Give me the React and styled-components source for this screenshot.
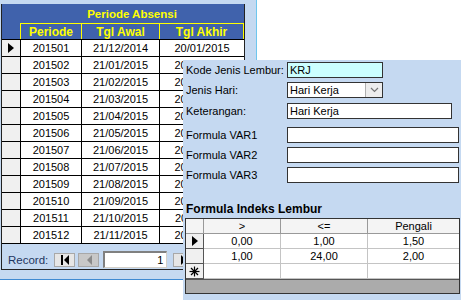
import React from 'react';
import styled, { createGlobalStyle } from 'styled-components';

const Global = createGlobalStyle`
  html, body { margin: 0; padding: 0; background: #fff; }
  body { font-family: "Liberation Sans", Arial, sans-serif; font-size: 11px; color: #000; }
  * { box-sizing: border-box; }
`;

const Desktop = styled.div`
  position: relative;
  width: 461px;
  height: 300px;
  overflow: hidden;
  background: #fff;
`;

const BackWindow = styled.div`
  position: absolute;
  left: 0;
  top: 0;
  width: 257px;
  height: 280px;
  background: #c5d9f1;
  border-right: 1px solid #6ec6ee;
  border-bottom: 1px solid #3f8ad2;
  padding: 4px 0 0 1px;
`;

const Form = styled.div`
  width: 244px;
  height: 266px;
  border: 1px solid #222;
  border-top: none;
  display: flex;
  flex-direction: column;
`;

const TitleBar = styled.div`
  height: 19px;
  background: #4062ac;
  color: #ffff00;
  font-weight: bold;
  font-size: 11.5px;
  display: flex;
  align-items: center;
  justify-content: center;
  padding-left: 18px;
`;

const GridRow = styled.div`
  display: grid;
  grid-template-columns: 19px 61px 78px 84px;
  height: ${p => p.$h}px;
`;

const HeadCell = styled.div`
  background: #4062ac;
  color: #ffff00;
  font-weight: bold;
  font-size: 12px;
  display: flex;
  align-items: center;
  justify-content: center;
  border-top: ${p => (p.$blank ? 'none' : '1px solid #ffff00')};
  border-right: 1px solid #ffff00;
`;

const SelCell = styled.div`
  background: #f0f0f0;
  border-top: 1px solid #000;
  border-right: 1px solid #000;
  display: flex;
  align-items: center;
  justify-content: center;
`;

const DataCell = styled.div`
  background: #fff;
  border-top: 1px solid #000;
  border-right: ${p => (p.$last ? 'none' : '1px solid #000')};
  display: flex;
  align-items: center;
  justify-content: center;
  line-height: 16px;
`;

const TableBody = styled.div`
  border-bottom: 1px solid #000;
`;

const RecordBar = styled.div`
  flex: 1;
  display: flex;
  align-items: center;
  padding: 6px 0 0 6px;
`;

const RecordLabel = styled.span`
  color: #1e3560;
  font-size: 11.5px;
  margin-right: 6px;
`;

const NavBtn = styled.div`
  width: 21px;
  height: 14px;
  margin-right: ${p => p.$mr || 0}px;
  background: ${p => (p.$disabled ? '#c8c8c8' : '#e6e6e6')};
  border: 1px solid #a8a8a8;
  display: flex;
  align-items: center;
  justify-content: center;
`;

const RecordBox = styled.div`
  width: 64px;
  height: 17px;
  margin-right: 6px;
  background: #fff;
  border-top: 2px solid #808080;
  border-left: 2px solid #808080;
  border-right: 1px solid #d4d0c8;
  border-bottom: 1px solid #d4d0c8;
  display: flex;
  align-items: center;
  justify-content: flex-end;
  padding-right: 3px;
`;

const Overlay = styled.div`
  position: absolute;
  left: 183px;
  top: 60px;
  width: 278px;
  height: 240px;
  background: #c5d9f1;
  padding: 2px 0 0 2px;
  display: flex;
  flex-direction: column;
`;

const FieldRow = styled.div`
  display: grid;
  grid-template-columns: 102px auto;
  align-items: center;
  height: 16px;
  margin-top: ${p => p.$mt}px;
`;

const Label = styled.span`
  padding-left: 1px;
  white-space: nowrap;
`;

const Input = styled.div`
  width: ${p => p.$w}px;
  height: 16px;
  background: ${p => p.$bg || '#fff'};
  border: 1px solid #333;
  padding-left: 2px;
  line-height: 14px;
  display: flex;
  align-items: center;
  justify-content: space-between;
`;

const DropBtn = styled.div`
  width: 17px;
  height: 14px;
  background: #ededed;
  border-left: 1px solid #b0b0b0;
  display: flex;
  align-items: center;
  justify-content: center;
`;

const SectionTitle = styled.div`
  margin-top: 19px;
  font-weight: bold;
  font-size: 12px;
  height: 14px;
  line-height: 14px;
  padding-left: 1px;
`;

const SubGrid = styled.div`
  margin-top: 2px;
  width: 275px;
  border: 1px solid #333;
  display: flex;
  flex-direction: column;
`;

const SubRow = styled.div`
  display: grid;
  grid-template-columns: 18px 77px 87px 91px;
  height: 15px;
`;

const SubHead = styled.div`
  background: #f4f4f4;
  border-right: ${p => (p.$last ? 'none' : '1px solid #999')};
  border-bottom: 1px solid #999;
  display: flex;
  align-items: center;
  justify-content: center;
  line-height: 14px;
`;

const SubSel = styled.div`
  background: #f0f0f0;
  border-right: 1px solid #555;
  border-bottom: 1px solid #555;
  display: flex;
  align-items: center;
  justify-content: center;
`;

const SubCell = styled.div`
  background: #fff;
  border-right: ${p => (p.$last ? 'none' : '1px solid #c4c4c4')};
  border-bottom: 1px solid #c4c4c4;
  display: flex;
  align-items: center;
  justify-content: center;
  line-height: 14px;
`;

const GreyArea = styled.div`
  height: 14px;
  background: #ababab;
  border-top: 1px solid #555;
`;

const Pointer = () => (
  <svg width="6" height="10" viewBox="0 0 6 10">
    <polygon points="0,0 6,5 0,10" fill="#000" />
  </svg>
);

const Star = () => (
  <svg width="11" height="11" viewBox="0 0 11 11">
    <g stroke="#000" strokeWidth="1.2">
      <line x1="5.5" y1="0.5" x2="5.5" y2="10.5" />
      <line x1="0.5" y1="5.5" x2="10.5" y2="5.5" />
      <line x1="2" y1="2" x2="9" y2="9" />
      <line x1="9" y1="2" x2="2" y2="9" />
    </g>
  </svg>
);

const FirstIcon = () => (
  <svg width="10" height="10" viewBox="0 0 10 10">
    <rect x="1" y="0" width="2" height="10" fill="#000" />
    <polygon points="9,0 4,5 9,10" fill="#000" />
  </svg>
);

const PrevIcon = () => (
  <svg width="6" height="10" viewBox="0 0 6 10">
    <polygon points="6,0 1,5 6,10" fill="#8a8a8a" />
  </svg>
);

const NextIcon = () => (
  <svg width="6" height="10" viewBox="0 0 6 10">
    <polygon points="0,0 5,5 0,10" fill="#000" />
  </svg>
);

const Chevron = () => (
  <svg width="9" height="6" viewBox="0 0 9 6">
    <polyline points="1,1 4.5,4.5 8,1" fill="none" stroke="#777" strokeWidth="1.2" />
  </svg>
);

const periods = [
  ['201501', '21/12/2014', '20/01/2015'],
  ['201502', '21/01/2015', '20/02/2015'],
  ['201503', '21/02/2015', '20/03/2015'],
  ['201504', '21/03/2015', '20/04/2015'],
  ['201505', '21/04/2015', '20/05/2015'],
  ['201506', '21/05/2015', '20/06/2015'],
  ['201507', '21/06/2015', '20/07/2015'],
  ['201508', '21/07/2015', '20/08/2015'],
  ['201509', '21/08/2015', '20/09/2015'],
  ['201510', '21/09/2015', '20/10/2015'],
  ['201511', '21/10/2015', '20/11/2015'],
  ['201512', '21/11/2015', '20/12/2015'],
];

const indeks = [
  ['0,00', '1,00', '1,50'],
  ['1,00', '24,00', '2,00'],
];

export default function App() {
  return (
    <>
      <Global />
      <Desktop>
        <BackWindow>
          <Form>
            <TitleBar>Periode Absensi</TitleBar>
            <GridRow $h={16}>
              <HeadCell $blank />
              <HeadCell>Periode</HeadCell>
              <HeadCell>Tgl Awal</HeadCell>
              <HeadCell>Tgl Akhir</HeadCell>
            </GridRow>
            <TableBody>
              {periods.map((r, i) => (
                <GridRow key={r[0]} $h={17}>
                  <SelCell>{i === 0 && <Pointer />}</SelCell>
                  <DataCell>{r[0]}</DataCell>
                  <DataCell>{r[1]}</DataCell>
                  <DataCell $last>{r[2]}</DataCell>
                </GridRow>
              ))}
            </TableBody>
            <RecordBar>
              <RecordLabel>Record:</RecordLabel>
              <NavBtn $mr={3}><FirstIcon /></NavBtn>
              <NavBtn $mr={4} $disabled><PrevIcon /></NavBtn>
              <RecordBox>1</RecordBox>
              <NavBtn><NextIcon /></NavBtn>
            </RecordBar>
          </Form>
        </BackWindow>

        <Overlay>
          <FieldRow $mt={0}>
            <Label>Kode Jenis Lembur:</Label>
            <Input $w={96} $bg="#ccffff">KRJ</Input>
          </FieldRow>
          <FieldRow $mt={4}>
            <Label>Jenis Hari:</Label>
            <Input $w={96}>
              <span>Hari Kerja</span>
              <DropBtn><Chevron /></DropBtn>
            </Input>
          </FieldRow>
          <FieldRow $mt={5}>
            <Label>Keterangan:</Label>
            <Input $w={165}>Hari Kerja</Input>
          </FieldRow>
          <FieldRow $mt={8}>
            <Label>Formula VAR1</Label>
            <Input $w={172} />
          </FieldRow>
          <FieldRow $mt={4}>
            <Label>Formula VAR2</Label>
            <Input $w={172} />
          </FieldRow>
          <FieldRow $mt={4}>
            <Label>Formula VAR3</Label>
            <Input $w={172} />
          </FieldRow>
          <SectionTitle>Formula Indeks Lembur</SectionTitle>
          <SubGrid>
            <SubRow>
              <SubHead />
              <SubHead>&gt;</SubHead>
              <SubHead>&lt;=</SubHead>
              <SubHead $last>Pengali</SubHead>
            </SubRow>
            {indeks.map((r, i) => (
              <SubRow key={i}>
                <SubSel>{i === 0 && <Pointer />}</SubSel>
                <SubCell>{r[0]}</SubCell>
                <SubCell>{r[1]}</SubCell>
                <SubCell $last>{r[2]}</SubCell>
              </SubRow>
            ))}
            <SubRow>
              <SubSel><Star /></SubSel>
              <SubCell />
              <SubCell />
              <SubCell $last />
            </SubRow>
            <GreyArea />
          </SubGrid>
        </Overlay>
      </Desktop>
    </>
  );
}
